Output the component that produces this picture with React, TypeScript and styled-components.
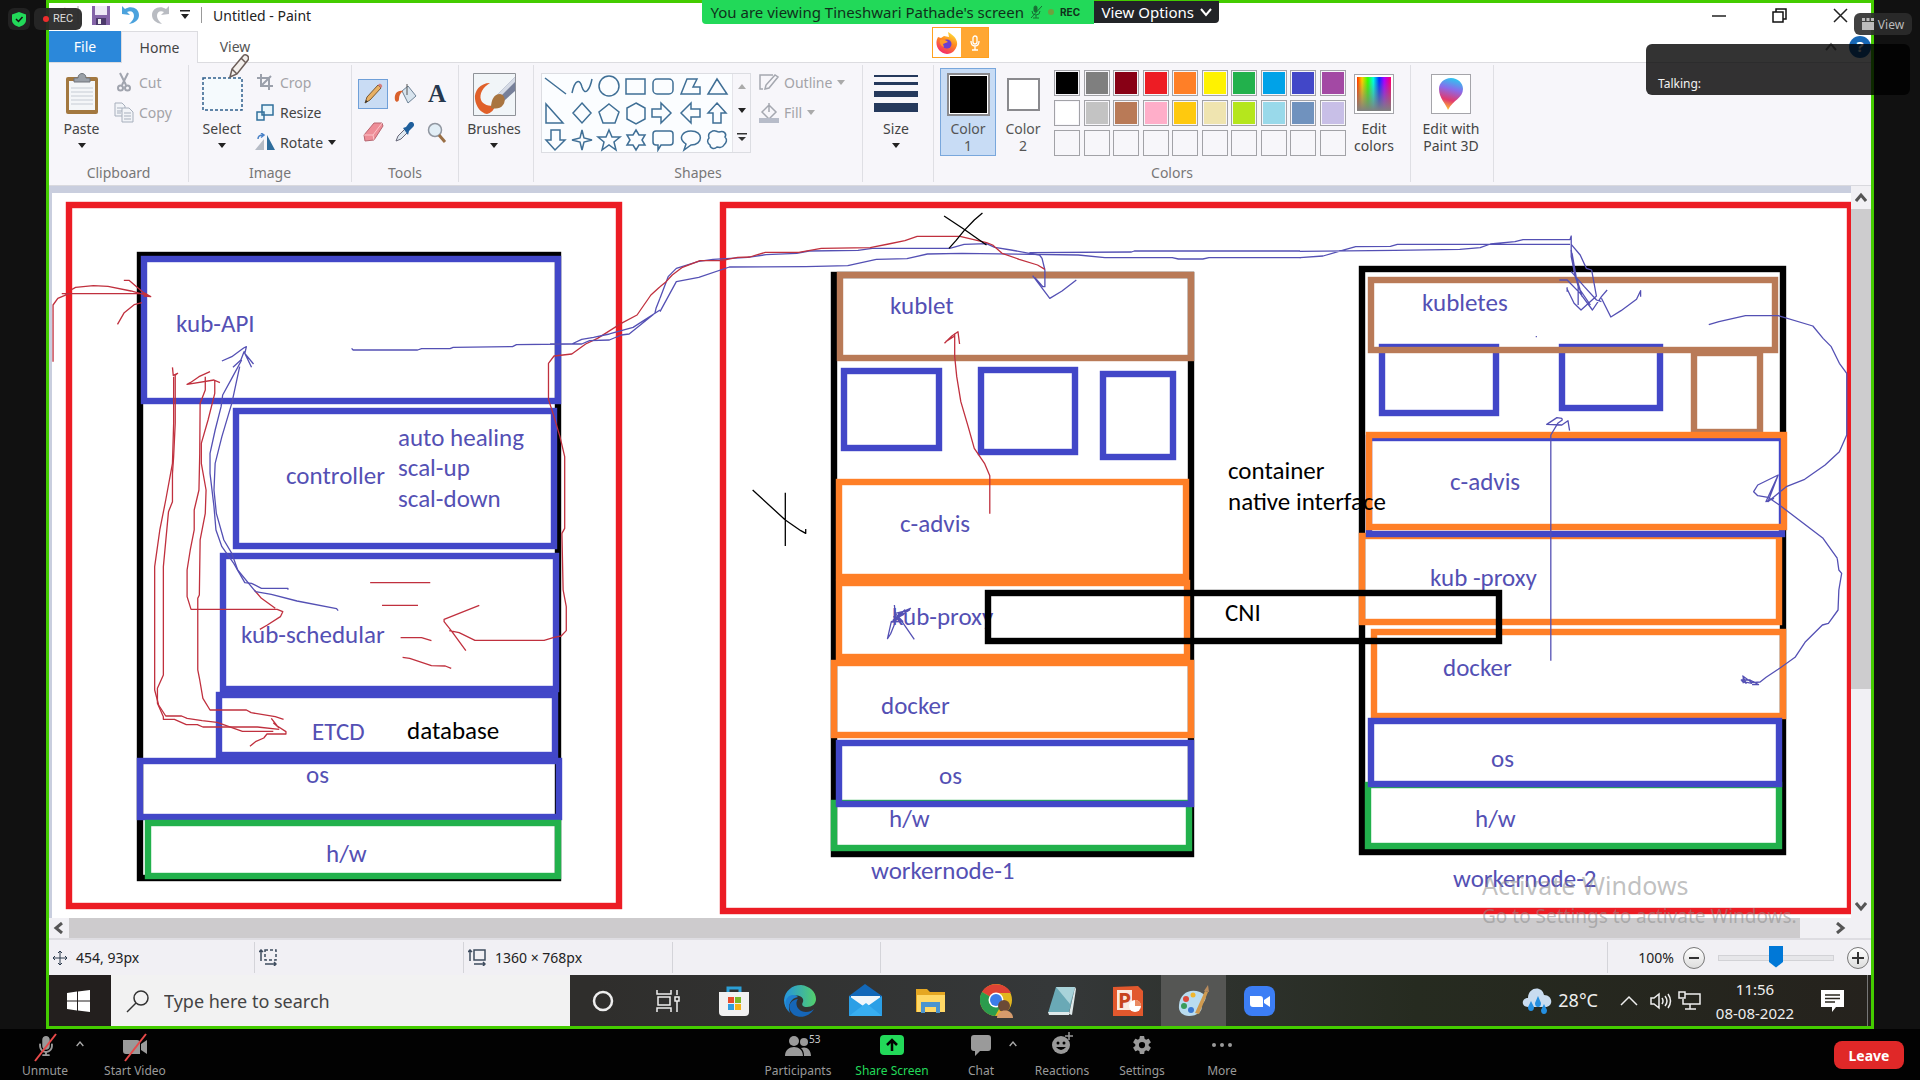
import React from "react";
import styled, { createGlobalStyle, css } from "styled-components";
import { FaMicrophone } from "react-icons/fa";
import { IoSettingsSharp } from "react-icons/io5";

const UI = '"Noto Sans", "Open Sans", sans-serif';

const GlobalStyle = createGlobalStyle`
  * { box-sizing: border-box; }
  html, body { margin: 0; background: #111; }
  body { font-family: ${UI}; font-size: 14px; line-height: 17px; color: #333; }
  button { font: inherit; color: inherit; background: none; border: 0; padding: 0; margin: 0; cursor: pointer; }
  svg { display: block; flex: none; }
`;

/* ---------- meeting shell ---------- */

const Shell = styled.div`
  position: relative;
  display: flex;
  flex-direction: column;
  min-height: 100vh;
  background: #111;
`;

const SharedScreen = styled.main`
  position: relative;
  flex: 1;
  display: flex;
  flex-direction: column;
  margin: 0 46px;
  border: 3px solid #4c0;
  background: #fff;
  overflow: hidden;
`;

const TopLeftBadges = styled.div`
  position: absolute;
  left: 8px;
  top: 8px;
  display: flex;
  gap: 4px;
`;

const Badge = styled.div<{ $wide?: boolean }>`
  display: flex;
  align-items: center;
  justify-content: center;
  gap: 4px;
  height: 22px;
  width: ${(p) => (p.$wide ? "48px" : "22px")};
  border-radius: 6px;
  background: ${(p) => (p.$wide ? "rgba(38,38,38,.94)" : "#222")};
  color: #ddd;
  font: 11px/22px Roboto, sans-serif;
`;

const Dot = styled.span<{ $color: string }>`
  width: 6px;
  height: 6px;
  border-radius: 50%;
  background: ${(p) => p.$color};
`;

const Banner = styled.div`
  position: absolute;
  top: 0;
  left: 0;
  right: 0;
  display: flex;
  justify-content: center;
  align-items: flex-start;
  pointer-events: none;
`;

const BannerText = styled.div`
  display: flex;
  align-items: center;
  gap: 6px;
  height: 24px;
  width: 392px;
  padding-left: 9px;
  white-space: nowrap;
  border-radius: 0 0 0 4px;
  background: #22d959;
  color: #10301b;
  font-size: 15px;
`;

const BannerRec = styled.strong`
  font: 700 10px/24px Inter, sans-serif;
`;

const ViewOptions = styled.button`
  display: flex;
  align-items: center;
  gap: 6px;
  width: 125px;
  height: 22px;
  margin-top: 1px;
  padding-left: 8px;
  white-space: nowrap;
  border-radius: 0 0 4px 0;
  background: #222427;
  color: #fff;
  font-size: 15px;
  pointer-events: auto;
`;

const MicInUse = styled.div`
  position: absolute;
  top: 27px;
  left: 50%;
  margin-left: -28px;
  display: grid;
  grid-template-columns: 1fr 27px;
  width: 57px;
  height: 31px;
  border: 1px solid #ffa11f;
  background: #fff;
  & > * { display: flex; align-items: center; justify-content: center; }
  & > :last-child { background: #ffa733; }
`;

const ViewBadge = styled.button`
  position: absolute;
  right: 8px;
  top: 13px;
  display: flex;
  align-items: center;
  justify-content: center;
  gap: 4px;
  width: 58px;
  height: 22px;
  border-radius: 6px;
  background: rgba(44, 44, 44, 0.9);
  color: #bbb;
  font-size: 12px;
`;

const Talking = styled.div`
  position: absolute;
  right: 10px;
  top: 44px;
  width: 264px;
  height: 51px;
  padding: 31px 12px 0;
  border-radius: 6px;
  background: rgba(0, 0, 0, 0.8);
  color: #f2f2f2;
  font-size: 12px;
`;

/* ---------- Paint: title bar and tabs ---------- */

const TitleBar = styled.header`
  display: flex;
  align-items: center;
  height: 28px;
  padding: 0 23px 4px 11px;
  color: #222;
`;

const QuickAccess = styled.div`
  display: flex;
  align-items: center;
  flex: 1;
  gap: 11px;
`;

const ToolDivider = styled.span`
  width: 1px;
  height: 16px;
  background: #999;
`;

const WindowButtons = styled.div`
  display: flex;
  gap: 46px;
`;

const Tabs = styled.nav`
  display: flex;
  height: 32px;
  border-bottom: 1px solid #dcdce0;
`;

const Tab = styled.button<{ $kind?: "file" | "active" }>`
  width: ${(p) => (p.$kind === "file" ? 72 : p.$kind === "active" ? 77 : 74)}px;
  height: 32px;
  padding-bottom: 1px;
  color: #555;
  ${(p) => p.$kind === "file" && css`height: 31px; background: #2b88da; color: #fff;`}
  ${(p) => p.$kind === "active" && css`background: #f7f6fa; border: 1px solid #dcdce0; border-bottom: 0; color: #444;`}
`;

const TabTools = styled.div`
  display: flex;
  flex: 1;
  align-items: center;
  justify-content: flex-end;
  gap: 12px;
`;

const Help = styled.button`
  width: 22px;
  height: 22px;
  border-radius: 50%;
  background: #1767b5;
  color: #fff;
  font-weight: 700;
  font-size: 15px;
`;

/* ---------- Paint: ribbon ---------- */

const Ribbon = styled.section`
  display: flex;
  height: 123px;
  padding: 2px 0 3px;
  background: #f7f6fa;
  border-bottom: 1px solid #d9d9de;
`;

const Group = styled.div<{ $w: number }>`
  display: flex;
  flex-direction: column;
  flex: none;
  width: ${(p) => p.$w}px;
  border-right: 1px solid #dfdfe4;
`;

const GroupBody = styled.div<{ $pad?: number; $gap?: number }>`
  display: flex;
  flex: 1;
  gap: ${(p) => p.$gap ?? 0}px;
  padding: 8px 0 0 ${(p) => p.$pad ?? 0}px;
`;

const GroupLabel = styled.div`
  height: 18px;
  text-align: center;
  color: #777;
`;

const BigButton = styled.button<{ $w: number }>`
  display: flex;
  flex-direction: column;
  align-items: center;
  flex: none;
  width: ${(p) => p.$w}px;
  height: 82px;
  line-height: 17px;
  color: #444;
  white-space: nowrap;
`;

const IconWell = styled.span`
  display: flex;
  align-items: center;
  justify-content: center;
  height: 42px;
  margin-bottom: 5px;
`;

const Caret = styled.span<{ $light?: boolean; $up?: boolean }>`
  width: 0;
  height: 0;
  border: 4px solid transparent;
  ${(p) => (p.$up ? "border-bottom" : "border-top")}: 5px solid ${(p) => (p.$light ? "#aaa" : "#222")};
  ${(p) => (p.$up ? "border-top: 0;" : "border-bottom: 0;")}
`;

const BigCaret = styled(Caret)`
  margin-top: 6px;
`;

const Stack = styled.div`
  display: flex;
  flex-direction: column;
  margin-top: -6px;
`;

const SmallButton = styled.button<{ $off?: boolean }>`
  display: grid;
  grid-template-columns: 20px auto auto;
  align-items: center;
  justify-content: start;
  justify-items: center;
  gap: 5px;
  height: 30px;
  white-space: nowrap;
  color: ${(p) => (p.$off ? "#a3a3a8" : "#444")};
  & > :nth-child(3) { margin-left: 3px; }
`;

const ToolGrid = styled.div`
  display: grid;
  grid-template-columns: repeat(3, 30px);
  grid-template-rows: 30px 30px;
  gap: 8px 2px;
  padding-top: 6px;
`;

const Tool = styled.button<{ $on?: boolean }>`
  display: flex;
  align-items: center;
  justify-content: center;
  border: 1px solid ${(p) => (p.$on ? "#6f9fd8" : "transparent")};
  background: ${(p) => (p.$on ? "#c9dcf4" : "none")};
`;

const ShapeBox = styled.div`
  display: grid;
  grid-template-columns: 1fr 18px;
  width: 210px;
  height: 80px;
  border: 1px solid #dcdde2;
  background: #fbfdff;
`;

const ShapeScroll = styled.div`
  display: flex;
  flex-direction: column;
  justify-content: space-around;
  align-items: center;
  border-left: 1px solid #e4e4e9;
  background: #f7f6fa;
`;

const ColorButton = styled.button<{ $on?: boolean }>`
  display: flex;
  flex-direction: column;
  align-items: center;
  flex: none;
  width: ${(p) => (p.$on ? 56 : 54)}px;
  height: 88px;
  margin-top: -5px;
  padding-top: 4px;
  color: #555;
  border: 1px solid ${(p) => (p.$on ? "#79a7dc" : "transparent")};
  background: ${(p) => (p.$on ? "#c8dcf5" : "none")};
`;

const CurrentColor = styled.span<{ $c: string; $s: number }>`
  width: ${(p) => p.$s}px;
  height: ${(p) => p.$s}px;
  border: 2px solid #8a8a8e;
  background: ${(p) => p.$c};
  box-shadow: inset 0 0 0 1px #fff;
`;

const Palette = styled.div`
  display: grid;
  grid-template-columns: repeat(10, 26px);
  justify-content: space-between;
  row-gap: 4px;
  width: 292px;
  height: 86px;
  margin: -3px 0 0 4px;
`;

const Swatch = styled.button<{ $c?: string }>`
  height: 26px;
  padding: 1px;
  border: 1px solid #a2a2a7;
  background: ${(p) => p.$c ?? "#f7f6fa"};
  background-clip: content-box;
`;

const PictureFrame = styled.span`
  display: flex;
  align-items: center;
  justify-content: center;
  width: 40px;
  height: 40px;
  border: 1px solid #a5a5aa;
  background: #fff;
`;

const Spectrum = styled.span`
  width: 34px;
  height: 34px;
  background: linear-gradient(rgba(128,128,128,0) 10%, #808080), linear-gradient(90deg, #f30, #fc0 15%, #3f0 32%, #0fd 48%, #03f 65%, #a0f 80%, #f06);
`;

/* ---------- Paint: drawing area ---------- */

const Workspace = styled.section`
  position: relative;
  display: grid;
  grid-template-columns: 1fr 20px;
  grid-template-rows: 1fr 20px;
  flex: 1;
  min-height: 0;
  background: #f1f0f4;
`;

const Viewport = styled.div`
  overflow: hidden;
  min-width: 0;
  padding: 7px 0 0 3px;
  background: #c9cede;
`;

const Picture = styled.svg`
  background: #fff;
  path { fill: none; vector-effect: non-scaling-stroke; stroke-width: 1.3; stroke-linejoin: round; }
  rect { fill: none; stroke-width: 6.4; }
  text { font: 25px Carlito, Calibri, Lato, sans-serif; }
`;

const VScroll = styled.div`
  display: grid;
  grid-template-rows: 23px 21fr 10fr;
  justify-items: center;
  & > :nth-child(2) { width: 100%; background: #cdccce; }
  & > button:last-child { align-self: end; padding-bottom: 6px; }
`;

const HScroll = styled.div`
  grid-column: 1 / -1;
  display: flex;
  align-items: center;
  & > button { width: 20px; display: flex; justify-content: center; }
`;

const HThumb = styled.div`
  flex: 1;
  height: 20px;
  margin-right: 30px;
  background: #cdcbcd;
`;

const HEnd = styled.div`
  width: 21px;
`;

const Watermark = styled.div`
  position: absolute;
  right: 69px;
  bottom: 96px;
  width: 320px;
  color: rgba(140, 140, 140, 0.55);
  font: 19px/28px ${UI};
  white-space: nowrap;
  pointer-events: none;
`;

const WatermarkTitle = styled.div`
  font-size: 25px;
  line-height: 34px;
`;

const StatusBar = styled.footer`
  display: flex;
  align-items: stretch;
  height: 37px;
  padding: 2px 0 2px;
  border-top: 2px solid #dedde2;
  background: #f1f0f4;
  color: #222;
`;

const StatusCell = styled.div<{ $w?: number }>`
  display: flex;
  align-items: center;
  gap: 9px;
  flex: ${(p) => (p.$w ? "none" : 1)};
  width: ${(p) => (p.$w ? p.$w + "px" : "auto")};
  padding-left: 4px;
  border-right: 1px solid #d4d4d9;
`;

const ZoomControls = styled.div`
  display: flex;
  align-items: center;
  justify-content: flex-end;
  gap: 9px;
  width: 263px;
  padding-right: 2px;
`;

const Round = styled.button`
  display: flex;
  align-items: center;
  justify-content: center;
  width: 22px;
  height: 22px;
  border: 1px solid #777;
  border-radius: 50%;
  background: linear-gradient(#fff, #ddd);
`;

const Slider = styled.input`
  appearance: none;
  width: 116px;
  height: 24px;
  margin: 0 4px;
  background: none;
  &::-webkit-slider-runnable-track { height: 6px; background: #e6e6e9; border: 1px solid #d2d2d6; }
  &::-webkit-slider-thumb {
    appearance: none;
    width: 14px;
    height: 22px;
    margin-top: -10px;
    background: #0078d7;
    clip-path: polygon(0 0, 100% 0, 100% 75%, 50% 100%, 0 75%);
  }
`;

/* ---------- Windows taskbar ---------- */

const Taskbar = styled.nav`
  display: flex;
  height: 51px;
  background: linear-gradient(90deg, #2f2e2c 30%, #353839 55%, #262b20 75%, #25221d);
  color: #eee;
`;

const Start = styled.button`
  display: flex;
  align-items: center;
  justify-content: center;
  width: 62px;
  padding-right: 4px;
  background: #231f1e;
`;

const Search = styled.label`
  display: flex;
  align-items: center;
  gap: 12px;
  width: 459px;
  padding-left: 15px;
  background: #f2f2f2;
`;

const SearchInput = styled.input`
  flex: 1;
  min-width: 0;
  border: 0;
  outline: 0;
  background: none;
  font: 18px/24px ${UI};
  &::placeholder { color: #444; opacity: 1; }
`;

const Apps = styled.div`
  display: flex;
  width: 722px;
`;

const TaskButton = styled.button<{ $on?: boolean }>`
  display: flex;
  align-items: center;
  justify-content: center;
  flex: 1;
  background: ${(p) => (p.$on ? "#555654" : "none")};
`;

const Tray = styled.div`
  display: flex;
  align-items: center;
  justify-content: flex-end;
  flex: 1;
  gap: 6px;
  font-size: 18px;
  margin-right: 3px;
  padding-right: 12px;
  border-right: 1px solid #777;
`;

const Clock = styled.time`
  width: 96px;
  text-align: center;
  font-size: 15px;
  line-height: 24px;
  white-space: nowrap;
`;

const Notify = styled.button`
  width: 46px;
  display: flex;
  justify-content: center;
`;

/* ---------- meeting toolbar ---------- */

const MeetingBar = styled.footer`
  display: grid;
  grid-template-columns: 1fr auto 1fr;
  height: 52px;
  background: #020202;
  color: #9a9a9a;
`;

const BarGroup = styled.div<{ $pad?: number }>`
  display: flex;
  padding-left: ${(p) => p.$pad ?? 0}px;
`;

const BarEnd = styled.div`
  display: flex;
  justify-content: flex-end;
  align-items: flex-start;
  padding: 12px 16px 0 0;
`;

const BarButton = styled.button<{ $w: number; $green?: boolean }>`
  position: relative;
  display: flex;
  flex-direction: column;
  align-items: center;
  justify-content: space-between;
  width: ${(p) => p.$w}px;
  padding: 3px 0 6px;
  font-size: 12px;
  white-space: nowrap;
  color: ${(p) => (p.$green ? "#22d959" : "#9a9a9a")};
`;

const Count = styled.span`
  position: absolute;
  left: 58px;
  top: 2px;
  font-size: 10px;
  color: #ccc;
`;

const MoreCaret = styled.button`
  width: 16px;
  margin-left: -18px;
  margin-right: 2px;
  padding-bottom: 26px;
  display: flex;
  align-items: center;
  justify-content: center;
  position: relative;
`;

const Leave = styled.button`
  width: 70px;
  height: 28px;
  border-radius: 8px;
  background: #e02828;
  color: #fff;
  font-weight: 700;
`;

const Pointer = styled.svg`
  position: absolute;
  left: 180px;
  top: 51px;
`;

/* ---------- icons ---------- */

const Chevron = ({ d, s = 12, c = "#555", w = 2 }: { d: "up" | "down" | "left" | "right"; s?: number; c?: string; w?: number }) => {
  const paths = { up: "M1 9 6 3l5 6", down: "M1 3l5 6 5-6", left: "M9 1 3 6l6 5", right: "M3 1l6 5-6 5" };
  return (
    <svg width={s} height={s} viewBox="0 0 12 12" fill="none" stroke={c} strokeWidth={w}>
      <path d={paths[d]} />
    </svg>
  );
};

const SaveIcon = () => (
  <svg width="20" height="19" viewBox="0 0 20 19">
    <path d="M1 0h18v19H1z" fill="#8464a8" />
    <path d="M4 0h12v9H4z" fill="#eee9f6" />
    <path d="M5 12h10v7H5z" fill="#4c3a6b" />
    <path d="M7 13h3v5H7z" fill="#eee" />
  </svg>
);

const TurnIcon = ({ c, flip }: { c: string; flip?: boolean }) => (
  <svg width="18" height="19" viewBox="0 0 18 19" transform={flip ? "scale(-1 1)" : undefined}>
    <path d="M0 0v8l8 1-3-3c4-2 7 0 7 4 0 3-2 5-5 8 6-1 10-4 10-9C17 2 9-1 3 3z" fill={c} />
  </svg>
);

const PasteIcon = () => (
  <svg width="34" height="42" viewBox="0 0 34 42">
    <rect x="1" y="4" width="32" height="37" rx="2" fill="#a3783f" />
    <path d="M4 8h26v29H4z" fill="#f4f6f8" />
    <path d="M6 15h22M6 19h22M6 23h22M6 27h22M6 31h22" stroke="#c6ccd4" />
    <path d="M9 9V5h4c0-6 8-6 8 0h4v4z" fill="#9aa0a8" stroke="#70757c" />
  </svg>
);

const CutIcon = () => (
  <svg width="14" height="20" viewBox="0 0 14 20" fill="none" stroke="#a0a4ae" strokeWidth="2">
    <path d="M3 1l6 12M11 1 5 13" />
    <circle cx="3.500" cy="16" r="2.500" />
    <circle cx="10.500" cy="16" r="2.500" />
  </svg>
);

const CopyIcon = () => (
  <svg width="20" height="21" viewBox="0 0 20 21" fill="#f2f4f8" stroke="#a7afbc">
    <path d="M1 1h7l3 3v10H1z" />
    <path d="M8 6h7l4 4v10H8z" />
    <path d="M3 6h5M3 9h5M3 11h4M10 11h7M10 14h7M10 17h7" />
  </svg>
);

const CropIcon = () => (
  <svg width="16" height="16" viewBox="0 0 16 16" fill="none" stroke="#9ba0ab" strokeWidth="2">
    <path d="M4 0v12h12M0 4h12v12M4 12 14 2" />
  </svg>
);

const ResizeIcon = () => (
  <svg width="18" height="17" viewBox="0 0 18 17" fill="#e8f5fb" stroke="#31709c" strokeWidth="1.500">
    <path d="M6 1h11v10H6zM1 8h7v8H1z" />
  </svg>
);

const RotateIcon = () => (
  <svg width="20" height="18" viewBox="0 0 20 18">
    <path d="M0 17 9 6v11z" fill="#b6bcc6" />
    <path d="M12 2l8 15h-8z" fill="#2f6d9c" />
    <path d="M3 6c0-3 2-4 5-4M6 0l3 2-3 2.500" fill="none" stroke="#4a82c8" strokeWidth="1.500" />
  </svg>
);

const PencilIcon = () => (
  <svg width="20" height="22" viewBox="0 0 20 22">
    <path d="M2 20l2-6L15 2l3 3L7 17z" fill="#e8b063" stroke="#7a5a33" />
    <path d="M15 2l3 3 1-1c1-2-2-4-3-3z" fill="#d37f7f" />
    <path d="M2 20l1-3 2 1.500z" fill="#333" />
  </svg>
);

const BucketIcon = () => (
  <svg width="23" height="22" viewBox="0 0 23 22">
    <path d="M8 8 14 3l8 10-8 7z" fill="#d8e4ee" stroke="#6c8195" />
    <path d="M13 12V1" stroke="#555" />
    <path d="M1 17c-1-6 2-10 8-9-3 2-4 5-4 8s-3 4-4 1z" fill="#d9602c" />
  </svg>
);

const EraserIcon = () => (
  <svg width="22" height="20" viewBox="0 0 22 20">
    <path d="M2 13 12 1h8l1 3-9 14-9 1z" fill="#ee8d97" stroke="#b76670" />
    <path d="M2 13h9l9-12M11 13l1 5" fill="none" stroke="#fbc4c8" />
  </svg>
);

const PickerIcon = () => (
  <svg width="20" height="20" viewBox="0 0 20 20">
    <path d="M1 19l2-5 7-7 3 3-7 7z" fill="#dfe8f0" stroke="#667" />
    <path d="M8 6l3-1 3-4c3-3 7 1 4 4l-4 4-1 4z" fill="#1f5f9c" />
  </svg>
);

const MagnifierIcon = () => (
  <svg width="20" height="21" viewBox="0 0 20 21">
    <circle cx="8" cy="8" r="6.500" fill="#e2eef6" stroke="#9096a0" strokeWidth="1.500" />
    <path d="M12 13l6 7" stroke="#9a6f45" strokeWidth="3" />
  </svg>
);

const BrushIcon = () => (
  <svg width="43" height="43" viewBox="0 0 43 43">
    <path d="M.5.500h42v42H.500z" fill="#f1f5f8" stroke="#8f9298" />
    <path d="M17 10C7 10 1 18 2 26c1 8 6 14 12 15 4-1 7-4 8-8-6 0-12-1-14-6-2-6 2-13 9-17z" fill="#e0602a" />
    <path d="M42 4v14L31 28l-7-6z" fill="#77809a" />
    <path d="M42 4 24 22l3 2L42 9z" fill="#d5dbe6" />
    <path d="M18 35c0-8 3-14 9-14 5 1 6 7 3 11-3 4-7 4-12 3z" fill="#a97540" />
  </svg>
);

const OutlineIcon = () => (
  <svg width="20" height="18" viewBox="0 0 20 18" fill="none" stroke="#a5a8b0" strokeWidth="1.500">
    <path d="M14 2H1v14h3M6 16l1-4L16 2l3 2-9 11z" />
  </svg>
);

const FillIcon = () => (
  <svg width="20" height="21" viewBox="0 0 20 21" fill="none" stroke="#a5a8b0" strokeWidth="1.500">
    <path d="M3 10 10 3l7 7-7 7zM10 10V1" />
    <path d="M0 16h20v5H0z" fill="#b7bcc9" stroke="none" />
  </svg>
);

const Paint3DIcon = () => (
  <svg width="24" height="32" viewBox="0 0 24 32">
    <defs>
      <linearGradient id="drop" x1=".6" y1="0" x2=".4" y2="1">
        <stop offset="0" stopColor="#2cc8f0" />
        <stop offset=".35" stopColor="#8a6bea" />
        <stop offset=".7" stopColor="#e23a6e" />
        <stop offset="1" stopColor="#ffc52e" />
      </linearGradient>
    </defs>
    <path d="M12 0c7 0 12 5 12 11 0 9-10 11-15 21C7 26 0 20 0 11 0 5 5 0 12 0z" fill="url(#drop)" />
  </svg>
);

const ShapesDrawing = () => (
  <svg width="190" height="78" viewBox="0 0 190 78" fill="none" stroke="#3f6f96" strokeWidth="1.500">
    <path d="M3 4l21 16M30 19c3-14 8-14 10-6 3 10 8 2 10-8" />
    <circle cx="67" cy="12" r="10" />
    <path d="M84 5h19v15H84z" />
    <rect x="111" y="5" width="20" height="15" rx="4" />
    <path d="M139 20l6-15h10l-4 8h7v7zM175 5l-9 15h19z" />
    <path d="M4 30v19h17zM40 29l9 10-9 10-9-10zM67 30l10 8-4 11H61l-4-11zM94 29l9 5v11l-9 5-9-5V34z" />
    <path d="M110 35h9v-6l10 10-10 10v-6h-9zM158 35h-9v-6l-10 10 10 10v-6h9zM175 29l9 10h-5v10h-8V39h-5z" />
    <path d="M9 56h9v10h5L13 76 4 66h5zM40 56l2 8 8 2-8 2-2 8-2-8-8-2 8-2zM67 56l3 7h8l-6 5 2 8-7-5-7 5 2-8-6-5h8zM94 56l3 5h6l-3 5 3 5h-6l-3 5-3-5h-6l3-5-3-5h6z" />
    <path d="M114 57h14q3 0 3 3v8q0 3-3 3h-9l-3 5v-5h-2q-3 0-3-3v-8q0-3 3-3zM142 76l2-6c-9-6-3-13 5-13 13 0 12 14 0 14z" />
    <path d="M169 58c4-3 5 0 8 0 5-2 8 2 6 5 3 3 1 6-1 8-2 4-5 2-7 2-3 3-7 1-7-2-3-2-3-5-1-7-1-3 0-5 2-6z" />
  </svg>
);

const SizeIcon = () => (
  <svg width="44" height="38" viewBox="0 0 44 38" fill="#25395c">
    <path d="M0 0h44v2H0zM0 7h44v3H0zM0 16h44v6H0zM0 28h44v9H0z" />
  </svg>
);

const SelectionIcon = ({ dashed }: { dashed?: boolean }) => (
  <svg width="18" height="17" viewBox="0 0 18 17" fill="none" stroke="#3e4c5e" strokeWidth="1.500">
    <path d="M6 1h11v10H6z" strokeDasharray={dashed ? "3 2" : undefined} />
    <path d="M2 12V1M0 3l2-2 2 2M6 15h11M15 13l2 2-2 2" />
  </svg>
);

const MoveIcon = () => (
  <svg width="14" height="16" viewBox="0 0 14 16" fill="none" stroke="#2c3a4c">
    <path d="M7 1v14M0 8h14M5 3l2-2 2 2M5 13l2 2 2-2M2 6 0 8l2 2M12 6l2 2-2 2" />
  </svg>
);

/* ---------- diagram data: x1, y1, x2, y2 of each outline ---------- */

const BLUE = "#4247c8";
const RED = "#ec1c24";
const ORANGE = "#ff7f27";
const BROWN = "#b97a57";
const GREEN = "#22b14c";
const INK = "#5450b4";
const RED_INK = "#c0303e";
const BLACK = "#000";

const boxes: [string, number, number, number, number][] = [
  [RED, 66, 202, 622, 909],
  [BLACK, 137, 252, 561, 881],
  [BLUE, 141, 256, 561, 404],
  [BLUE, 233, 408, 557, 549],
  [BLUE, 220, 553, 559, 692],
  [BLUE, 216, 692, 558, 758],
  [BLUE, 137, 758, 562, 820],
  [GREEN, 145, 820, 561, 879],
  [RED, 720, 202, 1853, 914],
  [BLACK, 831, 272, 1194, 857],
  [BROWN, 837, 272, 1194, 361],
  [BLUE, 841, 368, 942, 451],
  [BLUE, 978, 367, 1078, 455],
  [BLUE, 1100, 371, 1176, 460],
  [ORANGE, 836, 479, 1189, 580],
  [ORANGE, 836, 580, 1190, 660],
  [ORANGE, 831, 660, 1194, 738],
  [GREEN, 831, 800, 1192, 851],
  [BLUE, 836, 740, 1194, 807],
  [BLACK, 1359, 266, 1786, 855],
  [BLUE, 1379, 344, 1499, 416],
  [BLUE, 1559, 344, 1663, 411],
  [BROWN, 1368, 277, 1778, 353],
  [BROWN, 1691, 350, 1763, 435],
  [ORANGE, 1359, 533, 1782, 625],
  [BLUE, 1366, 435, 1785, 537],
  [ORANGE, 1366, 432, 1787, 530],
  [ORANGE, 1371, 629, 1786, 719],
  [GREEN, 1365, 782, 1782, 849],
  [BLUE, 1368, 718, 1782, 787],
];

const labels: [string, number, number, string?][] = [
  ["kub-API", 176, 332],
  ["controller", 286, 484],
  ["auto healing", 398, 446],
  ["scal-up", 398, 476],
  ["scal-down", 398, 507],
  ["kub-schedular", 241, 643],
  ["ETCD", 312, 740],
  ["database", 407, 739, BLACK],
  ["os", 306, 783],
  ["h/w", 326, 862],
  ["kublet", 890, 314],
  ["c-advis", 900, 532],
  ["kub-proxy", 892, 625],
  ["docker", 881, 714],
  ["os", 939, 784],
  ["h/w", 889, 827],
  ["workernode-1", 871, 879],
  ["container", 1228, 479, BLACK],
  ["native interface", 1228, 510, BLACK],
  ["CNI", 1225, 621, BLACK],
  ["kubletes", 1422, 311],
  ["c-advis", 1450, 490],
  ["kub -proxy", 1430, 586],
  ["docker", 1443, 676],
  ["os", 1491, 767],
  ["h/w", 1475, 827],
  ["workernode-2", 1453, 887],
];

const Drawing = () => (
  <Picture width="1799" height="725" viewBox="52 193 1799 725" role="img" aria-label="Kubernetes architecture drawing">
    {boxes.map(([c, x1, y1, x2, y2], i) => (
      <rect key={i} x={x1 + 3} y={y1 + 3} width={x2 - x1 - 6} height={y2 - y1 - 6} stroke={c} />
    ))}
    {labels.map(([t, x, y, c]) => (
      <text key={t + x} x={x} y={y} fill={c ?? INK}>{t}</text>
    ))}
    <rect x="988" y="593" width="511" height="48" stroke={BLACK} />

    <g transform="translate(40 190) scale(.3954 .33333)">
      <g stroke={RED_INK}>
        <path d="M33 515V345L45 325L75 310M78 300L90 292L135 287L172 289L230 303L275 318M55 311H270M212 271H225L262 308L280 320L262 318M196 403L213 368L238 344L258 338" />
        <path d="M335 532L337 556L348 550L342 556V700L338 800L335 850V935L325 965L312 1130V1455L297 1495V1540L312 1580V1588H340L370 1604H398L412 1611H550L605 1618" />
        <path d="M338 560V700L335 820L318 930L303 1020L290 1130V1500L300 1545L318 1578H358L372 1585L410 1592L448 1597L512 1624H590" />
        <path d="M585 1585L600 1608L622 1625V1632H574L566 1644L545 1655L531 1669M590 1598L605 1614" />
        <path d="M418 560V600L405 640L404 790L402 900L390 960V1020L380 1080L372 1140V1220L382 1258H600L614 1265L608 1280L575 1305L556 1318M542 1200L560 1225L595 1255" />
        <path d="M430 545L402 560L380 578L372 583L440 570L455 578M442 572V610L425 690L408 760V820L420 900L418 970L405 1050L403 1215L399 1225V1440L404 1470L412 1525L430 1560H522L534 1568L595 1580L616 1588" />
        <path d="M835 1178H987M865 1246H956M912 1343H965L990 1352M917 1402L935 1405L990 1427L1025 1428L1040 1435" />
        <path d="M1111 1246L1060 1270L1022 1288V1295L1040 1322L1077 1382M1035 1322L1060 1328L1100 1351H1275L1300 1342L1318 1338L1331 1322V1250L1323 1200L1320 1030L1327 1015V800L1315 740L1300 680L1286 628V520L1300 498L1345 492L1380 462L1410 445L1470 400L1510 375L1545 315L1568 290" />
      </g>
      <g stroke={INK}>
        <path d="M460 513L485 500L515 474L522 470L518 490L540 522M488 532L508 510L516 485L535 532" />
        <path d="M510 510L485 565L462 615L458 650L443 720L430 790V850L440 950L445 1020L460 1070L490 1120L518 1178L535 1180L560 1195H627V1199" />
        <path d="M505 530L485 640L460 740L443 820L440 900L446 970L465 1050L485 1090L500 1140L545 1205L585 1213L650 1233L750 1256L754 1262" />
        <path d="M788 475L792 480H955L965 476H1037L1045 472L1195 470L1205 464L1345 462L1370 448L1400 442L1440 432L1500 412L1568 360M1290 462H1370L1390 452L1440 450L1470 435L1490 432L1555 370L1558 355L1568 325" />
      </g>
    </g>

    <g transform="translate(660 190) scale(.40816 .33333)">
      <g stroke={INK}>
        <path d="M0 325L20 260L40 235L95 214L130 208L215 202L260 194L335 190L365 183L485 181L520 175H710L745 163L800 161L820 172L860 180L905 190L930 195L936 205L943 240V290H935M905 188L1155 186L1162 183H1568" />
        <path d="M0 365L40 275L95 262L170 231L357 230L460 227L530 208L605 206L655 192L740 190L1025 195L1090 203H1255L1270 207H1330L1345 203H1570" />
        <path d="M913 257L955 325L985 303L1020 270M918 262L938 290" />
      </g>
      <g stroke={RED_INK}>
        <path d="M0 290L15 275L30 255L55 232L98 212H150L190 202L220 201L258 187H340L395 175L515 173L560 162L600 152L630 139H735L800 158L815 165L838 190L880 208L925 225L943 238" />
        <path d="M808 971V857L795 820L770 775L755 710L737 635L727 560L722 500V430M697 460L715 438L730 425L734 462M700 455L722 438" />
      </g>
      <path stroke={BLACK} d="M696 78L745 118L785 152L800 165M790 69L770 90L745 122L725 152L708 175M227 900L307 990L345 1022L357 1030V1017M307 908V1068" />
    </g>

    <g transform="translate(1270 190) scale(.40816 .33333)" stroke={INK}>
      <path d="M73 184L305 181L465 178L515 173L540 162L600 155L620 149H735L738 138V200L748 260M73 203L130 198L175 182L210 170L295 169L312 163H735" />
      <path d="M738 163L760 195L775 235L788 240L800 320M738 180L745 240L755 290V345M738 245L770 290L800 330L812 335M709 270H728L760 310L790 360L812 320L826 300M727 295L745 340L762 360L800 318M748 260L765 320M740 190L750 260L760 300L785 345M728 292V305M812 325L835 381L860 362L898 328L908 302V320" />
      <path d="M1075 404L1100 395L1165 377H1245L1330 408L1355 445L1375 470L1395 520L1413 550V735L1395 785L1360 825L1310 868L1265 890L1220 935L1245 855L1195 885L1185 905L1195 917L1220 922L1248 945L1355 1045L1390 1105M1245 855L1215 935L1235 925" />
      <path d="M688 1412V735L705 700L716 690L715 685L703 683L678 703L715 705L730 692L734 722M651 440h3" />
    </g>

    <g transform="translate(1290 560) scale(.40179 .33333)" stroke={INK}>
      <path d="M1362 -5L1366 30L1373 40L1366 90L1364 150L1340 190L1325 195L1283 245L1257 292L1215 328L1185 352L1170 366L1150 368L1127 348L1135 370L1123 360L1145 360L1166 374H1150M1128 352V370M1124 364L1150 370" />
    </g>

    <g transform="translate(700 560) scale(.38265 .33333)" stroke={INK}>
      <path d="M508 135L512 180L500 185L490 236L498 222L520 160L550 145L530 165L505 180L535 150L515 175L528 185L560 238M505 170L525 178M500 186L530 184L510 160L548 150L515 172" />
    </g>
  </Picture>
);

/* ---------- taskbar icons ---------- */

const StoreIcon = () => (
  <svg width="32" height="32" viewBox="0 0 32 32">
    <path d="M10 8V3h12v5" fill="none" stroke="#2b9fd6" strokeWidth="3" />
    <path d="M1 7h30v20q0 4-4 4H5q-4 0-4-4z" fill="#f1f1f1" />
    <path d="M10 12h6v6h-6z" fill="#e84b2c" /><path d="M17 12h6v6h-6z" fill="#7bb928" />
    <path d="M10 19h6v6h-6z" fill="#2f9ee0" /><path d="M17 19h6v6h-6z" fill="#f5b419" />
  </svg>
);

const EdgeIcon = () => (
  <svg width="32" height="32" viewBox="0 0 32 32">
    <defs>
      <linearGradient id="edge" x2="1"><stop stopColor="#2494e0" /><stop offset="1" stopColor="#54d06b" /></linearGradient>
    </defs>
    <path d="M0 15C1 6 8 0 17 0c9 1 15 7 15 14 0 5-4 8-9 8-4 0-6-2-4-5 2-6-8-9-13-4-4 4-4 9-1 14C2 24 0 20 0 15z" fill="url(#edge)" />
    <path d="M14 12c-7 1-11 8-8 16-5-5-6-12-2-16 4-3 8-2 10 0z" fill="#1f7fd0" />
    <path d="M14 14c-4 5 0 13 8 13 3 0 6-1 8-3-4 7-13 10-20 6-8-6-5-15 4-16z" fill="#1566b8" />
  </svg>
);

const MailIcon = () => (
  <svg width="33" height="34" viewBox="0 0 33 34">
    <path d="M0 12 16 0l17 12v20H0z" fill="#1268b9" />
    <path d="M2 12h29v12H2z" fill="#f0f6fb" />
    <path d="M0 12l17 12L0 32zM33 12 16 24l17 8z" fill="#2b9fe6" />
    <path d="M0 32l17-13 16 13z" fill="#38aef0" />
  </svg>
);

const FolderIcon = () => (
  <svg width="30" height="27" viewBox="0 0 30 27">
    <path d="M0 2h11l3 3h15v20H0z" fill="#e5a722" />
    <path d="M1 8h28v17H1z" fill="#ffd866" />
    <path d="M5 26V15h19v11h-4v-6H9v6z" fill="#4a94cf" />
  </svg>
);

const ChromeIcon = () => (
  <svg width="34" height="34" viewBox="0 0 34 34">
    <circle cx="16" cy="16" r="16" fill="#e2b61f" />
    <path d="M16 16 2 8C8-3 26-2 31 9H16z" fill="#de4334" />
    <path d="M2 8C-4 18 3 31 15 32l7-12-6-4z" fill="#2b9c4d" />
    <circle cx="16" cy="16" r="7.500" fill="#fff" /><circle cx="16" cy="16" r="6" fill="#3c7de8" />
    <circle cx="24" cy="22" r="6" fill="#6b4a36" /><path d="M17 34c0-10 16-10 16 0z" fill="#d59b6c" />
  </svg>
);

const NotepadIcon = () => (
  <svg width="30" height="30" viewBox="0 0 30 30">
    <path d="M9 1h19l-6 26H1z" fill="#6aa9b6" />
    <path d="M9 1h19l-5 17z" fill="#a9d3da" />
    <path d="M1 26h21v3H2zM28 1l1 2-4 26-3-1z" fill="#dfe9ea" />
  </svg>
);

const PowerPointIcon = () => (
  <svg width="30" height="30" viewBox="0 0 30 30">
    <path d="M0 1l25-1 5 5v25H0z" fill="#e2582d" />
    <path d="M4 4h15v20H4z" fill="#fbe9df" />
    <circle cx="22" cy="20" r="6" fill="#fff" /><path d="M22 14v6h6c0-4-3-6-6-6z" fill="#e98b63" />
    <text x="5" y="22" fill="#c8431c" fontSize="21" fontWeight="700" fontFamily="Open Sans, sans-serif">P</text>
  </svg>
);

const PaletteIcon = () => (
  <svg width="32" height="31" viewBox="0 0 32 31">
    <path d="M1 20C2 8 12 3 22 7c10 5 4 10 1 13 3 6-4 11-12 11-6 0-11-4-10-11z" fill="#b9dcf0" />
    <circle cx="8" cy="14" r="3" fill="#dc4a3b" /><circle cx="15" cy="10" r="2.500" fill="#f0b62c" />
    <circle cx="6" cy="21" r="3" fill="#3a9c5a" /><circle cx="13" cy="25" r="3" fill="#3a78d0" />
    <path d="M17 28 27 6l3 1-9 22z" fill="#cf9a4f" /><path d="M26 6l4-6 1 7z" fill="#b98c5d" />
  </svg>
);

const ZoomIcon = () => (
  <svg width="31" height="30" viewBox="0 0 31 30">
    <rect width="31" height="30" rx="8" fill="#3c7ef5" />
    <path d="M6 10h10q3 0 3 3v8H9q-3 0-3-3zM20 14l6-4v11l-6-4z" fill="#fff" />
  </svg>
);

const WeatherIcon = () => (
  <svg width="30" height="28" viewBox="0 0 30 28">
    <path d="M6 20C-1 20-1 11 6 11 6 0 20-2 22 8c9 0 10 12 1 12z" fill="#c9dcf0" />
    <path d="M9 14l3 6q0 4-3 4t-3-4zM16 9l3 7q0 4-3 4t-3-4zM22 17l3 6q0 4-3 4t-3-4z" fill="#258fe0" />
  </svg>
);

const FirefoxIcon = () => (
  <svg width="22" height="22" viewBox="0 0 22 22">
    <defs>
      <linearGradient id="fox" x1=".8" y1="0" x2=".3" y2="1"><stop stopColor="#ffe83c" /><stop offset=".45" stopColor="#ff8a1e" /><stop offset="1" stopColor="#f3246f" /></linearGradient>
    </defs>
    <path d="M2 5l3 1 3-2 5 1-1-5c5 3 10 7 9 13-1 5-5 9-10 9C2 21-2 12 2 5z" fill="url(#fox)" />
    <circle cx="11" cy="12" r="4.500" fill="#6a3fd0" />
    <path d="M4 8c3-1 6 0 8 2l-5 2 1 3c-3-1-5-4-4-7z" fill="#ff9a28" />
  </svg>
);

const slash = <path d="M4 29 25 2" stroke="#e84a4a" strokeWidth="2" />;

const palette = [
  "#000000", "#7f7f7f", "#880015", "#ed1c24", "#ff7f27", "#fff200", "#22b14c", "#00a2e8", "#4247c8", "#a349a4",
  "#ffffff", "#c3c3c3", "#b97a57", "#ffaec9", "#ffc90e", "#efe4b0", "#b5e61d", "#99d9ea", "#7092be", "#c8bfe7",
];

export default function App() {
  return (
    <>
      <GlobalStyle />
      <Shell>
        <SharedScreen>
          <TitleBar>
            <QuickAccess>
              <svg width="20" height="18" viewBox="0 0 20 18"><path d="M0 10 5 1l3 9z" fill="#e7a08f" /><path d="M18 0v18" stroke="#aaa" /></svg>
              <button aria-label="Save"><SaveIcon /></button>
              <button aria-label="Undo"><TurnIcon c="#4ba2dd" /></button>
              <button aria-label="Redo"><TurnIcon c="#b9bcc2" flip /></button>
              <button aria-label="Customize quick access">
                <svg width="10" height="10" viewBox="0 0 10 10"><path d="M0 0h10v1.500H0zM1 4h8L5 9z" fill="#222" /></svg>
              </button>
              <ToolDivider />
              <span>Untitled - Paint</span>
            </QuickAccess>
            <WindowButtons>
              <button aria-label="Minimize"><svg width="14" height="16" viewBox="0 0 14 16"><path d="M0 9h14" stroke="#222" strokeWidth="1.500" /></svg></button>
              <button aria-label="Restore"><svg width="15" height="15" viewBox="0 0 15 15" fill="none" stroke="#111" strokeWidth="1.500"><path d="M1 4h10v10H1zM4 4V1h10v10h-3" /></svg></button>
              <button aria-label="Close"><svg width="15" height="15" viewBox="0 0 15 15" stroke="#222" strokeWidth="1.500"><path d="M1 1l13 13M14 1 1 14" /></svg></button>
            </WindowButtons>
          </TitleBar>
          <Tabs>
            <Tab $kind="file">File</Tab>
            <Tab $kind="active">Home</Tab>
            <Tab>View</Tab>
            <TabTools>
              <Chevron d="up" c="#888" />
              <Help>?</Help>
            </TabTools>
          </Tabs>

          <Ribbon>
            <Group $w={140}>
              <GroupBody $pad={10} $gap={10}>
                <BigButton $w={45}><IconWell><PasteIcon /></IconWell>Paste<BigCaret /></BigButton>
                <Stack>
                  <SmallButton $off><CutIcon />Cut</SmallButton>
                  <SmallButton $off><CopyIcon />Copy</SmallButton>
                </Stack>
              </GroupBody>
              <GroupLabel>Clipboard</GroupLabel>
            </Group>
            <Group $w={163}>
              <GroupBody $pad={8} $gap={8}>
                <BigButton $w={50}>
                  <IconWell><svg width="41" height="34" viewBox="0 0 41 34"><path d="M1 1h39v32H1z" fill="#f5fafd" stroke="#2f5f8c" strokeWidth="1.500" strokeDasharray="3 2" /></svg></IconWell>
                  Select<BigCaret />
                </BigButton>
                <Stack>
                  <SmallButton $off><CropIcon />Crop</SmallButton>
                  <SmallButton><ResizeIcon />Resize</SmallButton>
                  <SmallButton><RotateIcon />Rotate<Caret /></SmallButton>
                </Stack>
              </GroupBody>
              <GroupLabel>Image</GroupLabel>
            </Group>
            <Group $w={107}>
              <GroupBody $pad={6}>
                <ToolGrid>
                  <Tool $on aria-label="Pencil"><PencilIcon /></Tool>
                  <Tool aria-label="Fill with color"><BucketIcon /></Tool>
                  <Tool aria-label="Text"><svg width="24" height="26" viewBox="0 0 24 26"><text x="3" y="21" fontSize="25" fontWeight="700" fill="#26384e" fontFamily="Liberation Serif, serif">A</text></svg></Tool>
                  <Tool aria-label="Eraser"><EraserIcon /></Tool>
                  <Tool aria-label="Color picker"><PickerIcon /></Tool>
                  <Tool aria-label="Magnifier"><MagnifierIcon /></Tool>
                </ToolGrid>
              </GroupBody>
              <GroupLabel>Tools</GroupLabel>
            </Group>
            <Group $w={75}>
              <GroupBody $pad={5}>
                <BigButton $w={60}><IconWell><BrushIcon /></IconWell>Brushes<BigCaret /></BigButton>
              </GroupBody>
            </Group>
            <Group $w={329}>
              <GroupBody $pad={7} $gap={8}>
                <ShapeBox>
                  <ShapesDrawing />
                  <ShapeScroll>
                    <Caret $up $light />
                    <Caret />
                    <svg width="10" height="9" viewBox="0 0 10 9"><path d="M0 0h10v1.500H0zM1 4h8L5 8z" fill="#333" /></svg>
                  </ShapeScroll>
                </ShapeBox>
                <Stack>
                  <SmallButton $off><OutlineIcon />Outline<Caret $light /></SmallButton>
                  <SmallButton $off><FillIcon />Fill<Caret $light /></SmallButton>
                </Stack>
              </GroupBody>
              <GroupLabel>Shapes</GroupLabel>
            </Group>
            <Group $w={71}>
              <GroupBody $pad={8}>
                <BigButton $w={50}><IconWell><SizeIcon /></IconWell>Size<BigCaret /></BigButton>
              </GroupBody>
            </Group>
            <Group $w={477}>
              <GroupBody $pad={6}>
                <ColorButton $on><IconWell><CurrentColor $c="#000" $s={43} /></IconWell>Color<br />1</ColorButton>
                <ColorButton><IconWell><CurrentColor $c="#fff" $s={33} /></IconWell>Color<br />2</ColorButton>
                <Palette>
                  {Array.from({ length: 30 }, (_, i) => (
                    <Swatch key={i} $c={palette[i]} aria-label={palette[i] ?? "Empty color"} />
                  ))}
                </Palette>
                <BigButton $w={56}><IconWell><PictureFrame><Spectrum /></PictureFrame></IconWell>Edit<br />colors</BigButton>
              </GroupBody>
              <GroupLabel>Colors</GroupLabel>
            </Group>
            <Group $w={83}>
              <GroupBody $pad={4}>
                <BigButton $w={72}><IconWell><PictureFrame><Paint3DIcon /></PictureFrame></IconWell>Edit with<br />Paint 3D</BigButton>
              </GroupBody>
            </Group>
          </Ribbon>

          <Workspace>
            <Viewport><Drawing /></Viewport>
            <VScroll>
              <button aria-label="Scroll up"><Chevron d="up" w={3} /></button>
              <div />
              <button aria-label="Scroll down"><Chevron d="down" w={3} /></button>
            </VScroll>
            <HScroll>
              <button aria-label="Scroll left"><Chevron d="left" w={3} /></button>
              <HThumb />
              <button aria-label="Scroll right"><Chevron d="right" w={3} /></button>
              <HEnd />
            </HScroll>
          </Workspace>

          <StatusBar>
            <StatusCell $w={206}><MoveIcon />454, 93px</StatusCell>
            <StatusCell $w={209}><SelectionIcon dashed /></StatusCell>
            <StatusCell $w={209}><SelectionIcon />1360 × 768px</StatusCell>
            <StatusCell $w={208} />
            <StatusCell />
            <ZoomControls>
              <span>100%</span>
              <Round aria-label="Zoom out"><svg width="10" height="10" viewBox="0 0 10 10"><path d="M0 5h10" stroke="#333" strokeWidth="2" /></svg></Round>
              <Slider type="range" aria-label="Zoom level" min={0} max={100} defaultValue={50} />
              <Round aria-label="Zoom in"><svg width="12" height="12" viewBox="0 0 12 12"><path d="M0 6h12M6 0v12" stroke="#333" strokeWidth="2" /></svg></Round>
            </ZoomControls>
          </StatusBar>

          <Taskbar>
            <Start aria-label="Start"><svg width="23" height="22" viewBox="0 0 23 22" fill="#fff"><path d="M0 3l10-1.500V10.500H0zM11 1.400 23 0v10.500H11zM0 11.500h10V20.500L0 19zM11 11.500h12V22l-12-1.400z" /></svg></Start>
            <Search>
              <svg width="24" height="24" viewBox="0 0 24 24" fill="none" stroke="#333" strokeWidth="1.500"><circle cx="15" cy="9" r="7" /><path d="M10 14 1 23" /></svg>
              <SearchInput type="text" aria-label="Search" placeholder="Type here to search" />
            </Search>
            <Apps>
              <TaskButton aria-label="Cortana"><svg width="22" height="22" viewBox="0 0 22 22"><circle cx="11" cy="11" r="9" fill="none" stroke="#eee" strokeWidth="2.500" /></svg></TaskButton>
              <TaskButton aria-label="Task view"><svg width="24" height="22" viewBox="0 0 24 22" fill="none" stroke="#eee" strokeWidth="1.500"><path d="M1 0v4h14V0M1 22v-4h14v4M2 7h12v8H2zM21 0v5M21 11v11M19 7h4v4h-4z" /></svg></TaskButton>
              <TaskButton aria-label="Microsoft Store"><StoreIcon /></TaskButton>
              <TaskButton aria-label="Edge"><EdgeIcon /></TaskButton>
              <TaskButton aria-label="Mail"><MailIcon /></TaskButton>
              <TaskButton aria-label="File Explorer"><FolderIcon /></TaskButton>
              <TaskButton aria-label="Chrome"><ChromeIcon /></TaskButton>
              <TaskButton aria-label="Notepad"><NotepadIcon /></TaskButton>
              <TaskButton aria-label="PowerPoint"><PowerPointIcon /></TaskButton>
              <TaskButton $on aria-label="Paint"><PaletteIcon /></TaskButton>
              <TaskButton aria-label="Zoom"><ZoomIcon /></TaskButton>
            </Apps>
            <Tray>
              <WeatherIcon />
              <span>28°C</span>
              <svg width="40" height="14" viewBox="0 0 40 14" fill="none" stroke="#eee" strokeWidth="1.500"><path d="M17 11l8-8 8 8" /></svg>
              <svg width="22" height="18" viewBox="0 0 22 18" fill="none" stroke="#eee" strokeWidth="1.500"><path d="M1 6h3l5-4v14l-5-4H1zM12 6q2 3 0 6M15 4q4 5 0 10M18 2q5 7 0 14" /></svg>
              <svg width="23" height="20" viewBox="0 0 23 20" fill="none" stroke="#eee" strokeWidth="1.500"><path d="M7 3h15v10H5V8M1 1h6v6H1zM12 13v5M7 18h11" /></svg>
              <Clock>11:56<br />08-08-2022</Clock>
              <Notify aria-label="Notifications"><svg width="23" height="23" viewBox="0 0 23 23"><path d="M0 1h23v17h-8l-4 5v-5H0z" fill="#fff" /><path d="M4 6h15M4 9.500h15M4 13h10" stroke="#2a271f" strokeWidth="1.500" /></svg></Notify>
            </Tray>
          </Taskbar>

          <Watermark>
            <WatermarkTitle>Activate Windows</WatermarkTitle>
            Go to Settings to activate Windows.
          </Watermark>
          <Pointer width="20" height="24" viewBox="0 0 20 24"><path d="M1 23l2-8L14 2c2-3 7 0 5 4L8 20z M3 15l5 5M12 4l5 5" fill="#f3efec" stroke="#6b5d58" strokeWidth="1.500" /></Pointer>
        </SharedScreen>

        <MeetingBar>
          <BarGroup>
            <BarButton $w={90}>
              <svg width="28" height="30" viewBox="0 0 28 30"><FaMicrophone x="5" y="4" size={20} />{slash}</svg>
              Unmute
            </BarButton>
            <MoreCaret aria-label="Audio options"><Chevron d="up" s={8} c="#aaa" /></MoreCaret>
            <BarButton $w={90}>
              <svg width="28" height="30" viewBox="0 0 28 30"><path d="M2 8h14q3 0 3 3v11H5q-3 0-3-3zM20 12l6-4v14l-6-4z" fill="#9a9a9a" />{slash}</svg>
              Start Video
            </BarButton>
          </BarGroup>
          <BarGroup $pad={92}>
            <BarButton $w={94}>
              <svg width="26" height="28" viewBox="0 0 26 28" fill="#9a9a9a"><circle cx="9" cy="9" r="5" /><circle cx="19" cy="10" r="4" /><path d="M0 24c0-12 18-12 18 0zM19 24c0-4-1-6-3-8 5-2 10 1 10 8z" /></svg>
              <Count>53</Count>
              Participants
            </BarButton>
            <BarButton $w={94} $green>
              <svg width="24" height="26" viewBox="0 0 24 26"><rect y="3" width="24" height="20" rx="4" fill="#22d959" /><path d="M12 19V9M7 13l5-5 5 5" fill="none" stroke="#020202" strokeWidth="2.500" /></svg>
              Share Screen
            </BarButton>
            <BarButton $w={84}>
              <svg width="22" height="26" viewBox="0 0 22 26"><path d="M4 3h14q3 0 3 3v10q0 3-3 3h-8l-5 5v-5H4q-3 0-3-3V6q0-3 3-3z" fill="#9a9a9a" /></svg>
              Chat
            </BarButton>
            <MoreCaret aria-label="Chat options"><Chevron d="up" s={8} c="#aaa" /></MoreCaret>
            <BarButton $w={78}>
              <svg width="24" height="26" viewBox="0 0 24 26"><circle cx="11" cy="13" r="9" fill="#9a9a9a" /><circle cx="8" cy="11" r="1.500" /><circle cx="14" cy="11" r="1.500" /><path d="M6 15q5 6 10 0z" /><path d="M19 0v8M15 4h8" stroke="#9a9a9a" strokeWidth="1.500" /></svg>
              Reactions
            </BarButton>
            <BarButton $w={82}>
              <svg width="22" height="26" viewBox="0 0 22 26"><IoSettingsSharp x="1" y="3" size={20} /></svg>
              Settings
            </BarButton>
            <BarButton $w={78}>
              <svg width="22" height="26" viewBox="0 0 22 26" fill="#9a9a9a"><circle cx="3" cy="13" r="2" /><circle cx="11" cy="13" r="2" /><circle cx="19" cy="13" r="2" /></svg>
              More
            </BarButton>
          </BarGroup>
          <BarEnd><Leave>Leave</Leave></BarEnd>
        </MeetingBar>

        <TopLeftBadges>
          <Badge><svg width="14" height="15" viewBox="0 0 14 15"><path d="M7 0l7 2.500V8c0 4-4 6-7 7-3-1-7-3-7-7V2.500z" fill="#22d959" /><path d="M4 7l2.500 2.500L10.500 5" fill="none" stroke="#111" strokeWidth="1.500" /></svg></Badge>
          <Badge $wide><Dot $color="#ee2d2d" />REC</Badge>
        </TopLeftBadges>
        <Banner>
          <BannerText>
            <span>You are viewing Tineshwari Pathade's screen</span>
            <svg width="12" height="14" viewBox="0 0 12 14" fill="#177034" stroke="#177034"><rect x="4" y="1" width="3" height="6" rx="1.500" /><path d="M2 6q0 4 4 4t4-4M6 10v3M3 13h6M1 13 12 1" fill="none" /></svg>
            <Dot $color="#6fa03e" />
            <BannerRec>REC</BannerRec>
          </BannerText>
          <ViewOptions>View Options <Chevron d="down" c="#fff" /></ViewOptions>
        </Banner>
        <MicInUse>
          <span><FirefoxIcon /></span>
          <span><svg width="10" height="16" viewBox="0 0 10 16" fill="none" stroke="#fff" strokeWidth="1.300"><rect x="3" y="1" width="4" height="8" rx="2" /><path d="M1 6q0 5 4 5t4-5M5 11v4M2 15h6" /></svg></span>
        </MicInUse>
        <Talking>Talking:</Talking>
        <ViewBadge>
          <svg width="12" height="12" viewBox="0 0 12 12" fill="#bbb"><path d="M0 0h3v3H0zM4.500 0h3v3h-3zM9 0h3v3H9zM0 4h12v8H0z" /></svg>
          View
        </ViewBadge>
      </Shell>
    </>
  );
}
